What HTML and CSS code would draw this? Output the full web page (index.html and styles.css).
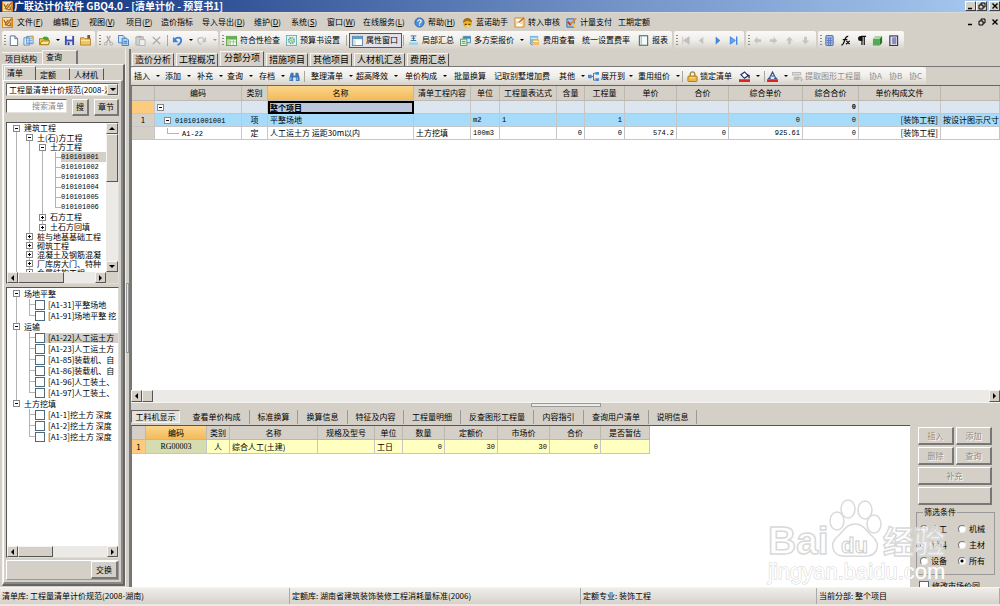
FILE: index.html
```html
<!DOCTYPE html>
<html lang="zh-CN">
<head>
<meta charset="utf-8">
<title>广联达计价软件 GBQ4.0</title>
<link rel="stylesheet" href="styles.css">
</head>
<body>
<svg class="defs" aria-hidden="true">
  <symbol id="app" viewBox="0 0 12 12"><rect width="12" height="12" rx="1" fill="#d98218"/><rect x="1" y="1" width="9" height="10" fill="#f6dfae"/><path d="M2 3l2 4 3-4M3 8l2 1 5-7M6 9.500h3V6" fill="none" stroke="#a35d10" stroke-width="1.300"/></symbol>
  <symbol id="new" viewBox="0 0 12 12"><path d="M2.500 1h5l3 3v7.500h-8z" fill="#fff" stroke="#4d6c9c"/><path d="M7.500 1v3h3" fill="#cfe0f5" stroke="#4d6c9c"/></symbol>
  <symbol id="new2" viewBox="0 0 12 12"><path d="M1 3h6v8H1zM4 1.500h7v8H4z" fill="#dcecfb" stroke="#5c8cc0"/><path d="M5 4h5M5 6h5M5 8h5" stroke="#7daadb"/><path d="M10 0v4M8 2h4" stroke="#eab52a"/></symbol>
  <symbol id="open" viewBox="0 0 12 12"><path d="M0.500 10.500V4h4l1 1h5v5.500z" fill="#f3c546" stroke="#a37a17"/><path d="M1 10.500l2-4h9l-2 4z" fill="#ffe58c" stroke="#a37a17"/><path d="M4 4c1-3 3-3 4-1V1l3 3-3 2V5" fill="#35a52f"/></symbol>
  <symbol id="save" viewBox="0 0 12 12"><path d="M1 1h10v10H1z" fill="#3d4fae"/><path d="M3 1h6v4H3z" fill="#f4f6ff"/><path d="M3 7h6v4H3z" fill="#dfe4f5"/><path d="M4 8h2v3H4z" fill="#283681"/></symbol>
  <symbol id="folder" viewBox="0 0 12 12"><path d="M0.500 11V3h4l1 1h6v7z" fill="#f2c55d" stroke="#b3832a"/><path d="M8 0h3v4H8z" fill="#76582b"/><path d="M1 6h10" stroke="#ffe9a8"/></symbol>
  <symbol id="cut" viewBox="0 0 12 12"><path d="M4 1l4 7M8 1L4 8" stroke="#a9a9a9" stroke-width="1.400"/><circle cx="3" cy="9.500" r="1.600" fill="none" stroke="#a9a9a9"/><circle cx="9" cy="9.500" r="1.600" fill="none" stroke="#a9a9a9"/></symbol>
  <symbol id="copy" viewBox="0 0 12 12"><path d="M0.500 0.500h5l2 2v6h-7z" fill="#cfe6fb" stroke="#3f79b5"/><path d="M4.500 3.500h5l2 2v6h-7z" fill="#a9d0f5" stroke="#3f79b5"/><path d="M6 7h4M6 9h4" stroke="#3f79b5"/></symbol>
  <symbol id="paste" viewBox="0 0 12 12"><path d="M1 2h8v9H1z" fill="#d2d2d2" stroke="#aaa"/><path d="M3 1h4v2H3z" fill="#aaa"/><path d="M5 5h6v6.500H5z" fill="#eee" stroke="#b0b0b0"/></symbol>
  <symbol id="del" viewBox="0 0 12 12"><path d="M2 2l8 8M10 2l-8 8" stroke="#a5a5a5" stroke-width="1.400"/></symbol>
  <symbol id="undo" viewBox="0 0 12 12"><path d="M3 5c2-3 7-3 7 1 0 2-2 4-4 5" fill="none" stroke="#3f7fd9" stroke-width="2"/><path d="M1 2v6h6z" fill="#3f7fd9"/></symbol>
  <symbol id="redo" viewBox="0 0 12 12"><path d="M9 5C7 2 2 2 2 6c0 2 2 4 4 4" fill="none" stroke="#c2c2c2" stroke-width="1.600"/><path d="M11 2v6H6z" fill="#c2c2c2"/></symbol>
  <symbol id="check" viewBox="0 0 12 12"><rect x=".5" y="1.500" width="11" height="10" fill="#fff" stroke="#58a146"/><path d="M1 2h10v3H1z" fill="#64b04a"/><path d="M1 7.500h10M4.500 5v6M8 5v6" stroke="#8ec77c"/><path d="M1 5h3v6H1z" fill="#b5d99f"/></symbol>
  <symbol id="gear" viewBox="0 0 12 12"><rect x=".5" y=".5" width="11" height="11" fill="#e2f1ef" stroke="#6bb0b0"/><circle cx="6" cy="6" r="3" fill="none" stroke="#4da097" stroke-width="1.800" stroke-dasharray="1.500 .8"/><circle cx="6" cy="6" r="1.500" fill="#a5d36e"/></symbol>
  <symbol id="win" viewBox="0 0 12 12"><rect x=".5" y="1.500" width="11" height="10" fill="#fff" stroke="#5c82b0"/><path d="M1 2h10v2.500H1z" fill="#53a3c1"/><path d="M1 5h3v6H1z" fill="#cde4d2"/></symbol>
  <symbol id="sum" viewBox="0 0 12 12"><path d="M3 1h6M4 3.500h4M3 6h6M6 1v5" stroke="#35699a"/><path d="M1 8h10v3H1z" fill="#9fd3e9"/></symbol>
  <symbol id="multi" viewBox="0 0 12 12"><path d="M3.500 1.500h8v7h-8z" fill="#d4ebf9" stroke="#3f86b7"/><path d="M4 2h7v2H4z" fill="#3f86b7"/><path d="M.5 4.500h7v7h-7z" fill="#edf7dd" stroke="#4a9460"/><path d="M2 7h4M2 9h4" stroke="#4a9460"/></symbol>
  <symbol id="view" viewBox="0 0 12 12"><path d="M1 1h9v8H1z" fill="#7eb9dc"/><path d="M2 3h7v1H2z" fill="#fff"/><path d="M4 5h7v6H4z" fill="#f0bd65"/><path d="M5 7h5" stroke="#fff"/><path d="M1 9l3 2" stroke="#3b7ea6"/></symbol>
  <symbol id="report" viewBox="0 0 12 12"><rect x="1.500" y=".8" width="9" height="10.400" fill="#f5fbf9" stroke="#44736c" stroke-width="1.200"/><path d="M3.500 1v10" stroke="#8db5ae"/></symbol>
  <symbol id="first" viewBox="0 0 12 12"><path d="M3 2v8M10 2v8L4 6z" fill="#c0c0c0" stroke="#c0c0c0"/></symbol>
  <symbol id="prev" viewBox="0 0 12 12"><path d="M8 2v8L3 6z" fill="#c4c4c4"/></symbol>
  <symbol id="next" viewBox="0 0 12 12"><path d="M4 1.500v9L9 6z" fill="#3f86e2"/></symbol>
  <symbol id="last" viewBox="0 0 12 12"><path d="M2.500 2v8L8 6z" fill="#63a1ee" stroke="#3f86e2"/><path d="M9.500 1.500v9" stroke="#3f86e2" stroke-width="1.500"/></symbol>
  <symbol id="arrow" viewBox="0 0 12 12"><path d="M2 6l4-4v2.500h4v3H6V10z" fill="#c5c5c5"/></symbol>
  <symbol id="calc" viewBox="0 0 12 12"><rect x="2" y=".5" width="8" height="11" rx="1" fill="#a6bff0" stroke="#48639e"/><path d="M3 3.500h6M3 6h6M3 8.500h6M5 3v8M7 3v8" stroke="#5d7bbd"/></symbol>
  <symbol id="fx" viewBox="0 0 12 12"><path d="M1.500 11c2 0 2.500-2 3.500-5s1.500-5 4-4.500M3 5h5M7 6.500l3.500 3.500M10.500 6.500L6.500 10" fill="none" stroke="#111" stroke-width="1.400"/></symbol>
  <symbol id="para" viewBox="0 0 12 12"><path d="M6.500 2v9M9 2v9M11 1.500H5.500" stroke="#111" stroke-width="1.300"/><path d="M7 1H5a2.500 2.500 0 000 5.500h2z" fill="#111"/></symbol>
  <symbol id="cube" viewBox="0 0 12 12"><path d="M1 4h7.500v7.500H1z" fill="#56a957"/><path d="M1 4l2.500-3H11L8.500 4z" fill="#a1dba0"/><path d="M8.500 4L11 1v7.500l-2.500 3z" fill="#2c7030"/></symbol>
  <symbol id="book" viewBox="0 0 12 12"><rect x="2" y="1" width="8.500" height="10.500" fill="#dfe0ef" stroke="#333350" stroke-width="1.200"/><path d="M4.500 2.500h4.500v7.500H4.500z" fill="#8a8db8"/></symbol>
  <symbol id="help" viewBox="0 0 12 12"><circle cx="6" cy="6" r="5" fill="#4c8fdb" stroke="#2a63b0"/><path d="M4.200 4.800c0-2.600 4-2.200 3.600 0C7.500 6 6 6 6 7.300M6 8.300v1.300" fill="none" stroke="#fff" stroke-width="1.300"/></symbol>
  <symbol id="helper" viewBox="0 0 12 12"><circle cx="6" cy="6.500" r="5" fill="#edb52a"/><path d="M1 6a5 5 0 0110 0L6 4z" fill="#a36d14"/><path d="M3 8h2M7 8h2" stroke="#4d320a" stroke-width="1.500"/><path d="M5 10h3" stroke="#fff"/></symbol>
  <symbol id="audit" viewBox="0 0 12 12"><path d="M1 1h10v10H1z" fill="#f4dca4" stroke="#cf8d2e"/><path d="M2 3l5 1-3 5h5" stroke="#fff" stroke-width="2" fill="none"/><path d="M5 6l6-5" stroke="#bf671f" stroke-width="1.500"/></symbol>
  <symbol id="pay" viewBox="0 0 12 12"><path d="M1 2h8v9H1z" fill="#a7c9e8" stroke="#2d629a"/><path d="M3 8l7-7 2 1-7 7z" fill="#e5863a"/><path d="M2 5l3 4" stroke="#c73527" stroke-width="2"/><path d="M8 7h3v4H8z" fill="#f5cf48"/></symbol>
  <symbol id="bino" viewBox="0 0 12 12"><path d="M2 2h3v3h2V2h3l1.500 5v4h-4V7h-3v4h-4V7z" fill="#3d77b7"/><path d="M2 7v3M9 7v3" stroke="#b6d9f5"/></symbol>
  <symbol id="tree" viewBox="0 0 12 12"><path d="M3 6h3V2.500h2M6 6v4h2" fill="none" stroke="#3c68ac"/><path d="M0 4h4v4H0zM8 1h4v3H8zM8 8h4v3H8z" fill="#4e88cf"/></symbol>
  <symbol id="lock" viewBox="0 0 12 12"><path d="M3.500 6V3.500a2.500 2.500 0 015 0V6" fill="none" stroke="#a28a50" stroke-width="1.500"/><rect x="1" y="5.500" width="10" height="6" rx="1" fill="#edb83f" stroke="#a9781b"/><path d="M3 7.500h6" stroke="#fbe8a7"/></symbol>
  <symbol id="bucket" viewBox="0 0 12 12"><path d="M2 4l4-3 4 4-4 3z" fill="#fff" stroke="#222c66" stroke-width="1.300"/><path d="M9 4l2 1v3" stroke="#222c66" stroke-width="1.500" fill="none"/><path d="M0 9h12v3H0z" fill="#e0231c"/></symbol>
  <symbol id="fonta" viewBox="0 0 12 12"><path d="M2.500 8L6 1l3.500 7M4 5.500h4M1 8h3M8 8h3" fill="none" stroke="#2f5399" stroke-width="1.200"/><path d="M0 9h12v3H0z" fill="#e0231c"/></symbol>
  <symbol id="extract" viewBox="0 0 12 12"><path d="M0 1h10v4H0zM2 6h6v4H2z" fill="#bbb"/><path d="M7 7h3v4l2-2" stroke="#aaa" fill="none"/><path d="M1 3h8" stroke="#eee"/></symbol>
</svg>

<div class="app">
  <header class="titlebar">
    <svg class="ic"><use href="#app"/></svg>
    <h1>广联达计价软件 GBQ4.0 - [清单计价 - 预算书1]</h1>
    <div class="winbtns raised">
      <button aria-label="最小化"><svg viewBox="0 0 8 8"><path d="M1 6.500h4" stroke="#000" stroke-width="1.500"/></svg></button><button aria-label="还原"><svg viewBox="0 0 8 8"><path d="M3 3V1h4v4H5M1 3h4v4H1z" fill="none" stroke="#000"/></svg></button><button class="close" aria-label="关闭"><svg viewBox="0 0 8 8"><path d="M1.500 1.500l5 5M6.500 1.500l-5 5" stroke="#000" stroke-width="1.400"/></svg></button>
    </div>
  </header>

  <nav class="menubar">
    <svg class="ic"><use href="#app"/></svg>
    <button>文件(<u>F</u>)</button><button>编辑(<u>E</u>)</button><button>视图(<u>V</u>)</button><button>项目(<u>P</u>)</button><button>造价指标</button><button>导入导出(<u>D</u>)</button><button>维护(<u>D</u>)</button><button>系统(<u>S</u>)</button><button>窗口(<u>W</u>)</button><button>在线服务(<u>L</u>)</button>
    <button><svg class="ic"><use href="#help"/></svg>帮助(<u>H</u>)</button><button><svg class="ic"><use href="#helper"/></svg>蓝诺助手</button><button><svg class="ic"><use href="#audit"/></svg>转入审核</button><button><svg class="ic"><use href="#pay"/></svg>计量支付</button><button>工期定额</button>
    <div class="winbtns">
      <button aria-label="最小化"><svg viewBox="0 0 8 8"><path d="M1 6.500h4" stroke="#000" stroke-width="1.500"/></svg></button><button aria-label="还原"><svg viewBox="0 0 8 8"><path d="M3 3V1h4v4H5M1 3h4v4H1z" fill="none" stroke="#000"/></svg></button><button class="close" aria-label="关闭"><svg viewBox="0 0 8 8"><path d="M1.500 1.500l5 5M6.500 1.500l-5 5" stroke="#000" stroke-width="1.400"/></svg></button>
    </div>
  </nav>

  <div class="toolbars">
    <div class="strip file">
      <i class="grip"></i><button aria-label="新建"><svg class="ic"><use href="#new"/></svg></button><button aria-label="新建项目"><svg class="ic"><use href="#new2"/></svg></button><button aria-label="打开"><svg class="ic"><use href="#open"/></svg><b class="dd"></b></button><button aria-label="保存"><svg class="ic"><use href="#save"/></svg></button><button aria-label="文件夹"><svg class="ic"><use href="#folder"/></svg></button>
    </div>
    <div class="strip edit">
      <i class="grip"></i><button aria-label="剪切"><svg class="ic"><use href="#cut"/></svg></button><button aria-label="复制"><svg class="ic"><use href="#copy"/></svg></button><button aria-label="粘贴"><svg class="ic"><use href="#paste"/></svg></button><button aria-label="删除"><svg class="ic"><use href="#del"/></svg></button><i class="sep"></i><button aria-label="撤销"><svg class="ic"><use href="#undo"/></svg><b class="dd"></b></button><button class="off" aria-label="重做"><svg class="ic"><use href="#redo"/></svg><b class="dd"></b></button>
    </div>
    <div class="strip tools">
      <i class="grip"></i><button><svg class="ic"><use href="#check"/></svg>符合性检查</button><button><svg class="ic"><use href="#gear"/></svg>预算书设置</button><i class="sep"></i><button class="pressed"><svg class="ic"><use href="#win"/></svg>属性窗口</button><i class="sep"></i><button><svg class="ic"><use href="#sum"/></svg>局部汇总</button><button><svg class="ic"><use href="#multi"/></svg>多方案报价<b class="dd"></b></button><button><svg class="ic"><use href="#view"/></svg>费用查看</button><button>统一设置费率</button><button><svg class="ic"><use href="#report"/></svg>报表</button>
    </div>
    <div class="strip nav">
      <i class="grip"></i><button aria-label="首条"><svg class="ic"><use href="#first"/></svg></button><button aria-label="上一条"><svg class="ic"><use href="#prev"/></svg></button><button aria-label="下一条"><svg class="ic"><use href="#next"/></svg></button><button aria-label="末条"><svg class="ic"><use href="#last"/></svg></button>
    </div>
    <div class="strip nav">
      <i class="grip"></i><button aria-label="左移"><svg class="ic"><use href="#arrow"/></svg></button><button aria-label="右移"><svg class="ic right"><use href="#arrow"/></svg></button><button aria-label="上移"><svg class="ic up"><use href="#arrow"/></svg></button><button aria-label="下移"><svg class="ic down"><use href="#arrow"/></svg></button>
    </div>
    <div class="strip nav five">
      <i class="grip"></i><button aria-label="计算器"><svg class="ic"><use href="#calc"/></svg></button><button aria-label="函数"><svg class="ic"><use href="#fx"/></svg></button><button aria-label="段落"><svg class="ic"><use href="#para"/></svg></button><button aria-label="图形"><svg class="ic"><use href="#cube"/></svg></button><button aria-label="手册"><svg class="ic"><use href="#book"/></svg></button>
    </div>
  </div>

  <div class="body">
    <aside class="side">
      <div class="tabs outer-tabs"><button>项目结构</button><button class="on">查询</button></div>
      <div class="side-frame">
        <div class="tabs inner-tabs"><button class="on">清单</button><button>定额</button><button>人材机</button></div>
        <div class="side-inner">
          <div class="combo"><select aria-label="清单规范"><option>工程量清单计价规范(2008-湖南)</option></select><span class="sb-btn"><b class="dd"></b></span></div>
          <div class="search"><input type="text" placeholder="搜索清单" aria-label="搜索清单"><button class="btn">搜</button><button class="btn">章节</button></div>
          <div class="treebox first">
            <div class="treeview">
              <ul class="tree compact">
                <li><div><i class="ex"></i>建筑工程</div>
                  <ul>
                    <li><div><i class="ex"></i>土(石)方工程</div>
                      <ul>
                        <li><div><i class="ex"></i>土方工程</div>
                          <ul class="leaves num">
                            <li><div class="sel"><span>010101001</span></div></li><li><div><span>010101002</span></div></li><li><div><span>010101003</span></div></li><li><div><span>010101004</span></div></li><li><div><span>010101005</span></div></li><li><div><span>010101006</span></div></li>
                          </ul></li>
                        <li><div><i class="ex plus"></i>石方工程</div></li>
                        <li><div><i class="ex plus"></i>土石方回填</div></li>
                      </ul></li>
                    <li><div><i class="ex plus"></i>桩与地基基础工程</div></li>
                    <li><div><i class="ex plus"></i>砌筑工程</div></li>
                    <li><div><i class="ex plus"></i>混凝土及钢筋混凝</div></li>
                    <li><div><i class="ex plus"></i>厂库房大门、特种</div></li>
                    <li><div><i class="ex plus"></i>金属结构工程</div></li>
                  </ul></li>
              </ul>
              <div class="vscroll"><span class="sb-btn"><b class="tri up"></b></span><span class="thumb"></span><i></i><span class="sb-btn"><b class="tri down"></b></span></div>
            </div>
            <div class="hscroll"><span class="sb-btn"><b class="tri left"></b></span><span class="thumb wide"></span><i></i><span class="sb-btn"><b class="tri right"></b></span><span class="corner"></span></div>
          </div>
          <div class="treebox second">
            <div class="treeview">
              <ul class="tree roomy">
                <li><div><i class="ex"></i>场地平整</div>
                  <ul class="leaves">
                    <li><div><label><input type="checkbox">[A1-31]平整场地</label></div></li><li><div><label><input type="checkbox">[A1-91]场地平整 挖</label></div></li>
                  </ul></li>
                <li><div><i class="ex"></i>运输</div>
                  <ul class="leaves">
                    <li><div class="sel"><label><input type="checkbox">[A1-22]人工运土方</label></div></li><li><div><label><input type="checkbox">[A1-23]人工运土方</label></div></li><li><div><label><input type="checkbox">[A1-85]装载机、自</label></div></li><li><div><label><input type="checkbox">[A1-86]装载机、自</label></div></li><li><div><label><input type="checkbox">[A1-96]人工装土、</label></div></li><li><div><label><input type="checkbox">[A1-97]人工装土、</label></div></li>
                  </ul></li>
                <li><div><i class="ex"></i>土方挖填</div>
                  <ul class="leaves">
                    <li><div><label><input type="checkbox">[A1-1]挖土方 深度</label></div></li><li><div><label><input type="checkbox">[A1-2]挖土方 深度</label></div></li><li><div><label><input type="checkbox">[A1-3]挖土方 深度</label></div></li>
                  </ul></li>
              </ul>
            </div>
            <div class="hscroll"><span class="sb-btn"><b class="tri left"></b></span><span class="thumb mid"></span><i></i><span class="sb-btn"><b class="tri right"></b></span></div>
          </div>
          <div class="swap"><button class="btn">交换</button></div>
        </div>
      </div>
    </aside>
    <div class="splitter"><span></span></div>

    <main class="main">
      <div class="maintabs"><button>造价分析</button><button>工程概况</button><button class="on">分部分项</button><button>措施项目</button><button>其他项目</button><button>人材机汇总</button><button>费用汇总</button></div>
      <div class="cmdrow">
        <div class="strip cmds">
          <button>插入<b class="dd"></b></button><button>添加<b class="dd"></b></button><button>补充<b class="dd"></b></button><button>查询<b class="dd"></b></button><button>存档<b class="dd"></b></button><button aria-label="查找"><svg class="ic"><use href="#bino"/></svg></button><i class="sep"></i><button>整理清单<b class="dd"></b></button><button>超高降效<b class="dd"></b></button><button>单价构成<b class="dd"></b></button><button>批量换算</button><button>记取别墅增加费</button><button>其他<b class="dd"></b></button><button><svg class="ic"><use href="#tree"/></svg>展开到<b class="dd"></b></button><button>重用组价<b class="dd"></b></button><i class="sep"></i><button><svg class="ic"><use href="#lock"/></svg>锁定清单</button><button aria-label="填充颜色"><svg class="ic"><use href="#bucket"/></svg><b class="dd"></b></button><i class="sep"></i><button aria-label="字体颜色"><svg class="ic"><use href="#fonta"/></svg><b class="dd"></b></button><button class="off"><svg class="ic"><use href="#extract"/></svg>提取图形工程量</button><button class="off">协A</button><button class="off">协B</button><button class="off">协C</button>
        </div>
      </div>
      <section class="grid-pane">
        <table class="grid big">
          <colgroup><col class="c23"><col class="c87"><col class="c26"><col class="c146"><col class="c57"><col class="c29"><col class="c57"><col class="c28"><col class="c40"><col class="c52"><col class="c52"><col class="c74"><col class="c56"><col class="c82"><col></colgroup>
          <thead><tr><th></th><th>编码</th><th>类别</th><th class="hot">名称</th><th>清单工程内容</th><th>单位</th><th>工程量表达式</th><th>含量</th><th>工程量</th><th>单价</th><th>合价</th><th>综合单价</th><th>综合合价</th><th>单价构成文件</th><th></th></tr></thead>
          <tbody>
            <tr class="total"><td class="rownum hot"></td><td><i class="ex l0"></i></td><td></td><td class="cursor">整个项目</td><td></td><td></td><td></td><td></td><td></td><td></td><td></td><td></td><td class="n">0</td><td></td><td></td></tr>
            <tr class="picked"><td class="rownum">1</td><td><i class="ex l1"></i><span class="num">010101001001</span></td><td class="c">项</td><td>平整场地</td><td></td><td class="num">m2</td><td class="num">1</td><td></td><td class="n">1</td><td></td><td></td><td class="n">0</td><td class="n">0</td><td class="r">[装饰工程]</td><td>按设计图示尺寸</td></tr>
            <tr><td class="rownum"></td><td><i class="elbow"></i><span class="num">A1-22</span></td><td class="c">定</td><td>人工运土方 运距30m以内</td><td>土方挖填</td><td class="num">100m3</td><td></td><td class="n">0</td><td class="n">0</td><td class="n">574.2</td><td class="n">0</td><td class="n">925.61</td><td class="n">0</td><td class="r">[装饰工程]</td><td></td></tr>
          </tbody>
        </table>
      </section>
      <div class="hscroll long"><span class="sb-btn"><b class="tri left"></b></span><span class="thumb small"></span><i></i><span class="sb-btn"><b class="tri right"></b></span></div>
      <div class="hsplit"><span></span></div>
      <div class="detailtabs"><button class="on">工料机显示</button><button>查看单价构成</button><button>标准换算</button><button>换算信息</button><button>特征及内容</button><button>工程量明细</button><button>反查图形工程量</button><button>内容指引</button><button>查询用户清单</button><button>说明信息</button></div>
      <div class="detail">
        <section class="detail-grid">
          <table class="grid small">
            <colgroup><col class="c14"><col class="c61"><col class="c23"><col class="c88"><col class="c57"><col class="c28"><col class="c42"><col class="c53"><col class="c52"><col class="c51"><col class="c49"></colgroup>
            <thead><tr><th></th><th class="hot">编码</th><th>类别</th><th>名称</th><th>规格及型号</th><th>单位</th><th>数量</th><th>定额价</th><th>市场价</th><th>合价</th><th>是否暂估</th></tr></thead>
            <tbody><tr><td class="rownum hot">1</td><td class="code">RG00003</td><td class="c">人</td><td>综合人工(土建)</td><td></td><td>工日</td><td class="n">0</td><td class="n">30</td><td class="n">30</td><td class="n">0</td><td></td></tr></tbody>
          </table>
        </section>
        <aside class="actions">
          <div class="btns"><button class="btn" disabled>插入</button><button class="btn" disabled>添加</button><button class="btn" disabled>删除</button><button class="btn" disabled>查询</button><button class="btn full" disabled>补充</button><button class="btn full" disabled aria-label="更多"></button></div>
          <fieldset><legend>筛选条件</legend>
            <label><input type="radio" name="f">人工</label><label><input type="radio" name="f">机械</label><label><input type="radio" name="f">材料</label><label><input type="radio" name="f">主材</label><label><input type="radio" name="f">设备</label><label><input type="radio" name="f" checked>所有</label>
          </fieldset>
          <label class="sync"><input type="checkbox">修改市场价同</label>
        </aside>
      </div>
    </main>
  </div>

  <footer class="status"><span>清单库: 工程量清单计价规范(2008-湖南)</span><span>定额库: 湖南省建筑装饰装修工程消耗量标准(2006)</span><span>定额专业: 装饰工程</span><span>当前分部: 整个项目</span></footer>

  <svg class="watermark" viewBox="0 0 184 90" aria-hidden="true">
    <g class="mark">
      <text class="bai" x="2" y="55">Bai</text>
      <ellipse cx="71" cy="22" rx="7" ry="9"/><ellipse cx="82" cy="10" rx="7" ry="9"/><ellipse cx="99" cy="11" rx="7" ry="9"/><ellipse cx="108" cy="25" rx="7" ry="9"/>
      <path d="M89 25c8 0 11 6 16 11 6 5 8 11 5 16-4 7-12 5-21 5s-17 2-21-5c-3-5-1-11 5-16 5-5 8-11 16-11z"/>
      <text class="jy" x="117" y="54">经验</text>
    </g>
    <text class="du" x="75" y="54">du</text>
    <text class="url" x="2" y="80">jingyan.baidu.com</text>
  </svg>
</div>
</body>
</html>
```
FILE: styles.css
```css
* { box-sizing: border-box; }
body {
  margin: 0;
  background: #d4d0c8;
  color: #000;
  font: 8px/10px "Noto Sans CJK SC", "Liberation Sans", sans-serif;
}
button, input, select { font: inherit; color: inherit; margin: 0; padding: 0; border: 0; background: none; border-radius: 0; }
button { white-space: nowrap; text-align: left; }
ul { list-style: none; margin: 0; padding: 0; }
i, b { font-style: normal; flex: none; }
.defs { position: absolute; width: 0; height: 0; }
.ic { width: 11px; height: 11px; flex: none; }
.ic.right { transform: rotate(180deg); }
.ic.up { transform: rotate(90deg); }
.ic.down { transform: rotate(270deg); }
.num { font-family: "Liberation Mono", monospace; font-size: 7px; }

.app { height: 100vh; display: flex; flex-direction: column; overflow: hidden; position: relative; }

/* Title and menu */
.titlebar {
  flex: none; height: 13px; display: flex; align-items: center; gap: 1px; padding-left: 2px;
  background: linear-gradient(90deg, #0c2f7c, #7091c5 60%, #a6caf0);
  border-bottom: 1px solid #dcdad4;
}
.titlebar h1 { margin: 0; flex: 1; color: #fff; font-size: 10px; line-height: 12px; font-weight: 700; white-space: nowrap; }
.winbtns { display: flex; }
.winbtns button { width: 11px; height: 10px; display: grid; place-items: center; }
.winbtns svg { width: 8px; height: 8px; }
.winbtns .close { margin-left: 2px; }
.raised button { background: #d4d0c8; border: 1px solid; border-color: #fff #404040 #404040 #fff; }
.menubar {
  flex: none; height: 18px; display: grid; align-items: center; padding-left: 2px;
  grid-template-columns: 15px 36px 36px 37px 35px 41px 52px 37px 36px 36px 51px 48px 52px 52px 52px 1fr auto;
}
.menubar > button, .strip > button { display: flex; align-items: center; white-space: nowrap; }
.menubar .ic { margin-right: 3px; }

/* Toolbars */
.toolbars { flex: none; height: 18px; display: flex; gap: 2px; padding-left: 2px; }
.strip {
  display: grid; align-items: center; height: 18px;
  background: linear-gradient(#faf9f7, #f0eeea 50%, #d6d2ca);
  border-radius: 2px;
}
.grip { width: 2px; height: 10px; margin-left: 2px; background: repeating-linear-gradient(#8e8b84 0 1px, transparent 1px 3px); }
.sep { width: 1px; height: 11px; background: #a9a69e; }
.dd { border: solid transparent; border-width: 2px 2px 0; border-top-color: #000; width: 4px; height: 2px; margin-left: 6px; }
.off { color: #8f8c86; }
.off .dd { border-top-color: #999; }
.file { grid-template-columns: 6px 15px 16px 25px 16px 15px; }
.edit { grid-template-columns: 6px 15px 17px 16px 16px 5px 24px 22px; }
.tools { grid-template-columns: 6px 60px 60px 3px 54px 5px 52px 69px 53px 56px 34px; }
.tools .ic { margin-right: 3px; }
.tools .pressed { height: 15px; padding-left: 2px; border: 1px solid #4a5687; background: #dfe0e8; margin-right: 1px; }
.nav { grid-template-columns: 6px repeat(4, 16px); }
.nav.five { grid-template-columns: 6px repeat(5, 16px); }

.body { flex: 1; min-height: 0; display: flex; }

/* Left panel */
.side { flex: none; width: 125px; display: flex; flex-direction: column; padding: 1px 0 1px 2px; }
.tabs { display: flex; flex: none; align-items: flex-end; }
.tabs button { border-right: 1px solid #555; border-top: 1px solid #f5f4f0; height: 12px; padding: 0 3px; }
.tabs .on { height: 14px; border-left: 1px solid #f5f4f0; border-right-width: 2px; padding-bottom: 2px; }
.outer-tabs { height: 14px; }
.outer-tabs button { width: 40px; border-right: 0; }
.outer-tabs .on { width: 36px; border-right: 2px solid #777; }
.inner-tabs { height: 15px; padding-left: 1px; }
.inner-tabs button { width: 34px; padding-left: 4px; }
.inner-tabs .on { width: 32px; padding-left: 2px; border-right-width: 1px; }
.side-frame {
  flex: 1; min-height: 0; display: flex; flex-direction: column;
  border: solid; border-width: 1px 2px 2px 1px; border-color: #f5f4f0 #666 #666 #f5f4f0;
}
.side-inner {
  flex: 1; min-height: 0; display: flex; flex-direction: column; padding: 2px;
  border: solid; border-width: 1px 2px 2px 1px; border-color: #fff #888 #888 #fff;
}
.combo { display: flex; height: 13px; flex: none; background: #fff; border: 1px solid; border-color: #666 #e5e3de #e5e3de #666; }
.combo select { appearance: none; flex: 1; min-width: 0; overflow: hidden; white-space: nowrap; padding-left: 2px; }
.sb-btn { flex: none; width: 11px; display: grid; place-items: center; background: #d4d0c8; border: 1px solid; border-color: #f5f4f0 #555 #555 #f5f4f0; }
.combo .dd { margin: 0; border-width: 3px 3px 0; width: 6px; height: 3px; }
.search { display: flex; gap: 5px; flex: none; height: 23px; padding: 3px 0; }
.search input { flex: 1; min-width: 0; background: #fff; border: 1px solid; border-color: #555 #e5e3de #e5e3de #555; text-align: right; padding-right: 2px; margin-bottom: 3px; }
.search input::placeholder { color: #888; opacity: 1; }
.btn { text-align: center; background: #d4d0c8; border: solid; border-width: 1px 2px 2px 1px; border-color: #fff #777 #777 #fff; padding: 0 3px; }
.treebox { display: flex; flex-direction: column; background: #fff; border: 1px solid; border-color: #555 #ddd #ddd #555; min-height: 0; }
.first { flex: none; height: 162px; margin-top: 3px; }
.second { flex: 1; margin-top: 3px; }
.treeview { flex: 1; min-height: 0; display: flex; overflow: hidden; }
.tree { flex: 1; min-width: 0; overflow: hidden; padding: 0 0 0 5px; }
.tree, .tree ul { background: linear-gradient(#b4b4b4, #b4b4b4) 4px 4px / 1px 100% no-repeat; }
.tree { background-position: 9px 4px; }
.tree ul { margin-left: 13px; }
.tree li > div { height: 10px; display: flex; align-items: center; white-space: nowrap; }
.compact > li > ul > li > div { height: 9px; }
.tree.roomy li > div { height: 11px; }
.tree.roomy { background-size: 1px 110px; }
.ex { width: 7px; height: 7px; margin: 0 4px 0 1px; border: 1px solid #888; background: linear-gradient(#000, #000) center / 3px 1px no-repeat #fff; }
.plus { background: linear-gradient(#000, #000) center / 3px 1px no-repeat, linear-gradient(#000, #000) center / 1px 3px no-repeat, #fff; }
.tree .leaves { background-size: 1px calc(100% - 5px); background-position: 4px 0; }
.leaves li > div::before { content: ""; width: 6px; height: 1px; margin-left: 4px; background: #b4b4b4; flex: none; }
.leaves .sel span, .leaves .sel label { background: #d4d0c8; flex: 1; }
.leaves label { display: flex; align-items: center; gap: 3px; }
.leaves input, .sync input { appearance: none; width: 10px; height: 10px; border: 1px solid #4c6a80; background: #fff; flex: none; }
.vscroll { width: 12px; display: flex; flex-direction: column; background: #eceae6; flex: none; }
.vscroll .sb-btn { height: 11px; width: 12px; }
.vscroll i, .hscroll i { flex: 1; }
.thumb { background: #d4d0c8; border: 1px solid; border-color: #f5f4f0 #555 #555 #f5f4f0; }
.vscroll .thumb { height: 48px; }
.hscroll { height: 11px; flex: none; display: flex; background: #eceae6; }
.hscroll .corner { width: 12px; background: #d4d0c8; }
.wide { width: 46px; }
.mid { width: 35px; }
.small.thumb { width: 11px; }
.tri { width: 0; height: 0; border: 3px solid transparent; }
.tri.up { border-top: 0; border-bottom-color: #000; }
.tri.down { border-bottom: 0; border-top-color: #000; }
.tri.left { border-left: 0; border-right-color: #000; }
.tri.right { border-right: 0; border-left-color: #000; }
.swap { flex: none; height: 20px; margin-top: 2px; border: 1px solid; border-color: #fff #999 #999 #fff; display: flex; justify-content: flex-end; }
.swap .btn { width: 27px; }
.splitter { flex: none; width: 6px; display: flex; align-items: center; border-right: 2px solid #777; border-left: 1px solid #eee; }
.splitter span { width: 3px; height: 70px; border: 1px solid #999; background: #e5e3de; }

/* Main area */
.main { flex: 1; min-width: 0; display: flex; flex-direction: column; }
.maintabs { flex: none; height: 18px; display: flex; align-items: flex-end; border-bottom: 1px solid #777; padding: 2px 0 0 1px; }
.maintabs button { font-size: 9px; line-height: 12px; height: 13px; padding: 0 2px; border: solid; border-width: 1px 1px 0; border-color: #f5f4f0 #555 #555 #f5f4f0; margin-right: 2px; }
.maintabs .on { height: 15px; padding: 0 3px 2px; }
.cmdrow { flex: none; display: flex; border-bottom: 1px solid #666; height: 19px; }
.cmds {
  padding-left: 3px;
  grid-template-columns: 31px 32px 30px 32px 30px 15px 7px 45px 49px 49px 40px 65px 29px 50px 44px 5px 52px 25px 3px 25px 77px 20px 20px 17px;
}
.cmds .ic { margin-right: 2px; }
.cmds .dd { margin-left: 6px; }
.cmds .ic ~ .dd { margin-left: 4px; }
.grid-pane { flex: 1; min-height: 0; background: #fff; overflow: hidden; border-left: 1px solid #777; }
.grid { border-collapse: separate; border-spacing: 0; table-layout: fixed; }
.big { width: 100%; }
.grid th, .grid td { height: 13px; padding: 0 2px; overflow: hidden; white-space: nowrap; font-weight: 400; text-align: left; border-right: 1px solid #c6c6c6; border-bottom: 1px solid #c6c6c6; line-height: 10px; }
.grid th { height: 15px; background: #d4d0c8; text-align: center; border-color: #bdb9b0; padding: 0; }
.grid .hot { background: linear-gradient(#fbd58c, #f3ba58); }
.grid .rownum { background: #d4d0c8; text-align: center; padding: 0; }
.grid .rownum.hot { background: #fccb7d; }
.grid .c { text-align: center; }
.grid .r { text-align: right; }
.grid .n { text-align: right; font-family: "Liberation Mono", monospace; font-size: 7px; }
.grid .total td { background: #dce6f1; font-weight: 700; }
.grid .picked td { background: #a6dbfa; }
.grid .total .rownum { background: #fccb7d; }
.grid .picked .rownum { background: #d4d0c8; }
.grid .total .cursor { background: #bcc7dc; border: 2px solid #000; padding: 0; line-height: 8px; }
.grid .ex { display: inline-block; vertical-align: middle; margin: 0; }
.grid .l1 { margin: 0 4px 0 7px; }
.elbow { display: inline-block; width: 12px; height: 6px; margin: 0 3px 0 10px; border: solid #b4b4b4; border-width: 0 0 1px 1px; vertical-align: top; }
.c14 { width: 14px; } .c23 { width: 23px; } .c26 { width: 26px; } .c28 { width: 28px; } .c29 { width: 29px; }
.c40 { width: 40px; } .c42 { width: 42px; } .c49 { width: 49px; } .c51 { width: 51px; } .c52 { width: 52px; }
.c53 { width: 53px; } .c56 { width: 56px; } .c57 { width: 57px; } .c61 { width: 61px; } .c74 { width: 74px; }
.c82 { width: 82px; } .c87 { width: 87px; } .c88 { width: 88px; } .c146 { width: 146px; }
.long { height: 13px; border-bottom: 1px solid #f5f4f0; }
.hsplit { flex: none; height: 5px; display: flex; justify-content: center; }
.hsplit span { width: 70px; border: 1px solid #999; background: #eceae6; height: 4px; }

.detailtabs { flex: none; height: 17px; display: grid; align-items: center; grid-template-columns: 53px 66px 48px 50px 56px 57px 73px 50px 65px 48px; }
.detailtabs button { text-align: center; height: 14px; border-right: 1px solid #999; }
.detailtabs .on { border: 1px solid; border-color: #666 #f5f4f0 #f5f4f0 #666; margin-right: 4px; background: #e4e2dd; height: 13px; }
.detail { flex: none; height: 162px; display: flex; }
.detail-grid { flex: 1; min-width: 0; background: #fff; border-top: 1px solid #555; border-left: 1px solid #777; overflow: hidden; }
.small.grid { width: 518px; }
.small.grid td { background: #ffffc0; height: 14px; }
.small.grid th { height: 14px; }
.small.grid .code { background: #d5dcb0; text-align: center; font-family: "Liberation Serif", serif; }
.small.grid .rownum { background: #fccb7d; }
.actions { flex: none; width: 90px; padding: 2px 5px 0 6px; overflow: hidden; }
.btns { display: grid; grid-template-columns: 1fr 1fr; gap: 2px; padding: 0 3px 0 2px; }
.btns .btn { height: 18px; }
.btn:disabled { color: #8d8a84; text-shadow: 1px 1px #fff; }
.full { grid-column: 1 / 3; }
.actions fieldset { margin: 2px 0 0; padding: 7px 0 8px 3px; border: 1px solid #999; display: grid; grid-template-columns: 38px 1fr; gap: 6px 0; min-width: 0; }
.actions legend { padding: 0 1px; margin-left: 3px; }
.actions fieldset label, .sync { display: flex; align-items: center; gap: 3px; white-space: nowrap; }
.actions input[type="radio"] { appearance: none; width: 8px; height: 8px; border: 1px solid; border-color: #777 #eee #eee #777; border-radius: 50%; background: #fff; }
.actions input[type="radio"]:checked { background: radial-gradient(circle, #000 0 1px, #fff 2px); }
.sync { padding: 6px 0 0 3px; }

/* Status bar */
.status { flex: none; display: grid; grid-template-columns: 290fr 291fr 236fr 183fr; height: 19px; padding-bottom: 2px; border-top: 1px solid #f5f4f0; background: #ece9e3; }
.status span { border-right: 1px solid #aaa; padding: 3px 2px; background: linear-gradient(#f0eeea, #d6d2ca); white-space: nowrap; overflow: hidden; }

.watermark { position: absolute; right: 50px; bottom: 17px; width: 184px; height: 90px; pointer-events: none; font-family: "Liberation Sans", sans-serif; }
.mark { fill: #fff; fill-opacity: .7; stroke: #d9d9d9; stroke-width: 1.500; }
.bai { font-size: 39px; font-weight: 700; }
.jy { font-size: 31px; font-weight: 700; font-family: "Noto Sans CJK SC", sans-serif; }
.du { font-size: 22px; font-weight: 700; fill: #fff; stroke: #ccc; }
.url { font-size: 22px; fill: #fff; stroke: #d4d4d4; stroke-width: 1; paint-order: stroke; }
```
